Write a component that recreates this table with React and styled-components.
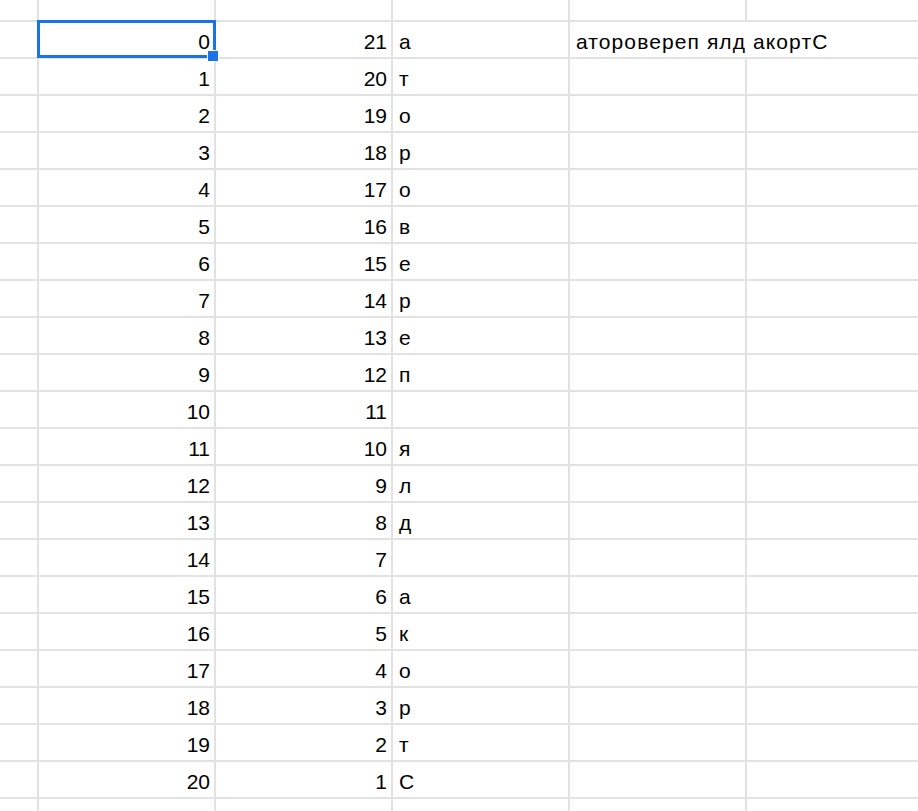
import React from "react";
import styled, { createGlobalStyle } from "styled-components";

const GlobalStyle = createGlobalStyle`
	html, body {
		margin: 0;
		padding: 0;
		background: #ffffff;
		overflow: hidden;
	}
`;

const word = "аторовереп ялд акортС";
const letters = "Строка для переворота".split("").reverse();

const rows = Array.from({ length: 21 }, (_, i) => ({
	a: i,
	b: 21 - i,
	c: letters[i] === " " ? "" : letters[i],
	d: i === 0 ? word : "",
}));

function App() {
	return (
		<>
			<GlobalStyle />
			<Sheet>
				{Array.from({ length: 6 }, (_, i) => (
					<Cell key={"top" + i} />
				))}
				{rows.map((row, i) => (
					<React.Fragment key={i}>
						<Cell />
						<Cell $align="right" $selected={i === 0}>
							{row.a}
							{i === 0 && <Handle />}
						</Cell>
						<Cell $align="right">{row.b}</Cell>
						<Cell>{row.c}</Cell>
						{row.d ? (
							// text spills over the next column, so its border is hidden
							<Cell $span>{row.d}</Cell>
						) : (
							<>
								<Cell />
								<Cell />
							</>
						)}
					</React.Fragment>
				))}
				{Array.from({ length: 6 }, (_, i) => (
					<Cell key={"bottom" + i} />
				))}
			</Sheet>
		</>
	);
}

const Sheet = styled.div`
	display: grid;
	grid-template-columns: 37px repeat(4, 175px) 1fr;
	grid-template-rows: 20px repeat(21, 35px) 1fr;
	gap: 2px;
	width: 918px;
	height: 811px;
	background-color: #e2e2e2;
	font-family: "Liberation Sans", Arial, sans-serif;
	font-size: 21px;
	color: #000000;
	overflow: hidden;
`;

const Cell = styled.div`
	position: relative;
	display: flex;
	align-items: flex-end;
	justify-content: ${(p) => (p.$align === "right" ? "flex-end" : "flex-start")};
	grid-column: ${(p) => (p.$span ? "span 2" : "auto")};
	padding: 0 4px 4px 6px;
	line-height: 23px;
	letter-spacing: ${(p) => (p.$span ? "1.1px" : "0")};
	background-color: #ffffff;
	white-space: nowrap;
	overflow: ${(p) => (p.$selected ? "visible" : "hidden")};
	z-index: ${(p) => (p.$selected ? 1 : 0)};
	&::after {
		content: "";
		display: ${(p) => (p.$selected ? "block" : "none")};
		position: absolute;
		left: -2px;
		top: -2px;
		right: -2px;
		bottom: -1px;
		border: 3px solid #1a73e8;
		pointer-events: none;
	}
`;

const Handle = styled.span`
	position: absolute;
	right: -5px;
	bottom: -5px;
	width: 10px;
	height: 10px;
	background-color: #1a73e8;
	border: 1px solid #ffffff;
	z-index: 2;
`;

export default App;
